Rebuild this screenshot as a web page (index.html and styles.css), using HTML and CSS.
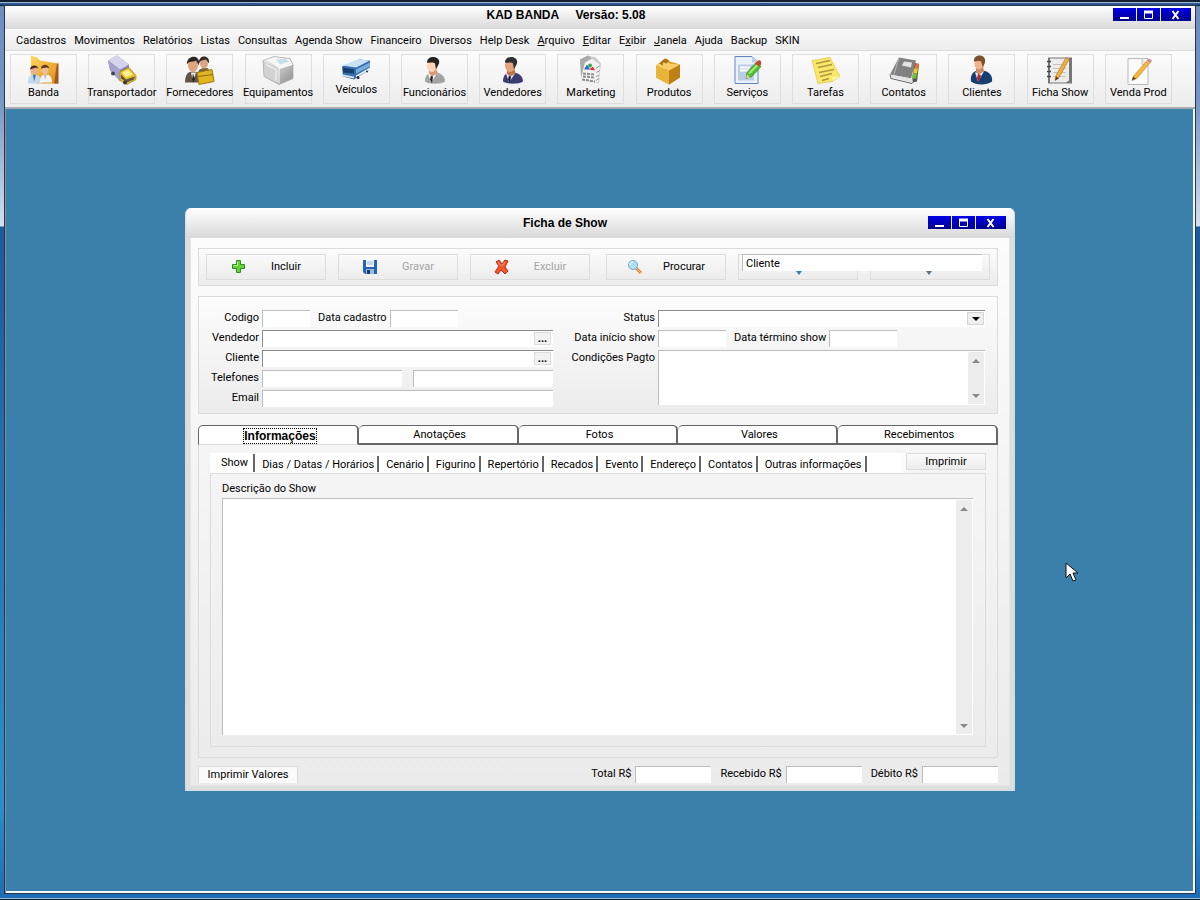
FILE: index.html
```html
<!DOCTYPE html>
<html lang="pt-BR">
<head>
    <meta charset="UTF-8">
    <title>KAD BANDA - Ficha de Show</title>
    <link rel="stylesheet" href="styles.css">
</head>
<body>

<div class="app">
    <header class="title-bar">
        <h1>KAD BANDA &nbsp;&nbsp;&nbsp; Versão: 5.08</h1>
        <div class="win-buttons">
            <button type="button" aria-label="Minimizar"><svg width="12" height="12"><path d="M1 9h9" stroke="#fff" stroke-width="2"/></svg></button>
            <button type="button" aria-label="Maximizar"><svg width="12" height="12"><path d="M1.500 3v6.500h8V3" fill="none" stroke="#fff"/><path d="M1 3h9" stroke="#fff" stroke-width="3"/></svg></button>
            <button type="button" class="close" aria-label="Fechar"><svg width="12" height="12"><path d="M2.500 2l6 8M8.500 2l-6 8" stroke="#fff" stroke-width="2"/></svg></button>
        </div>
    </header>

    <nav class="menu">
        <button type="button">Cadastros</button>
        <button type="button">Movimentos</button>
        <button type="button">Relatórios</button>
        <button type="button">Listas</button>
        <button type="button">Consultas</button>
        <button type="button">Agenda Show</button>
        <button type="button">Financeiro</button>
        <button type="button">Diversos</button>
        <button type="button">Help Desk</button>
        <button type="button"><u>A</u>rquivo</button>
        <button type="button"><u>E</u>ditar</button>
        <button type="button">E<u>x</u>ibir</button>
        <button type="button"><u>J</u>anela</button>
        <button type="button">Ajuda</button>
        <button type="button">Backup</button>
        <button type="button">SKIN</button>
    </nav>

    <div class="toolbar">
        <button type="button">
            <svg class="icon" viewBox="0 0 32 29">
                <defs>
                    <linearGradient id="gold" x1="0" y1="0" x2="1" y2="1"><stop offset="0" stop-color="#ffd95e"/><stop offset="1" stop-color="#dd8a1c"/></linearGradient>
                    <linearGradient id="grey" x1="0" y1="0" x2="1" y2="1"><stop offset="0" stop-color="#fafafa"/><stop offset="1" stop-color="#8d8d8d"/></linearGradient>
                </defs>
                <path d="M3 0l6 2 3 3 18 3v20H8L3 21z" fill="url(#gold)"/>
                <path d="M29 8h1.500v20H26z" fill="#9c5b1c"/>
                <path d="M0 28c0-7 2-9 6-9 5 0 7 3 8 9z" fill="#c6d9ec"/>
                <path d="M5 19l1 7 2-7z" fill="#3470b4"/>
                <ellipse cx="6" cy="15" rx="3.500" ry="4" fill="#e9b08a"/>
                <path d="M2 14c0-5 8-5 8-1l-2-1z" fill="#4a2b17"/>
                <path d="M12 27c0-6 2-8 6-8s6 3 6 8z" fill="#f3f3f3"/>
                <path d="M16 19l1 5 2-5z" fill="#b7babf"/>
                <ellipse cx="17" cy="14" rx="3.500" ry="4.500" fill="#efbd98"/>
                <path d="M13 13c0-5 8-5 8 0l-2-1z" fill="#68391d"/>
            </svg>
            <span>Banda</span>
        </button>
        <button type="button">
            <svg class="icon" viewBox="0 0 32 29">
                <path d="M2 5l9-5 12 9v6l-3 11L4 14z" fill="#8b87b5"/>
                <path d="M2 5l9-5 12 9-9 5z" fill="#d5d3ee"/>
                <path d="M2 5l12 9v12L4 15z" fill="#a6a2ce"/>
                <path d="M14 16l9-4 7 8v4l-9 5-7-4z" fill="#f1bd22" stroke="#8f7220" stroke-width=".6"/>
                <path d="M16 17l6-3 5 5-7 3z" fill="#fff193"/>
                <path d="M15 19l5 5 9-3-1 3-7 3-6-4z" fill="#5d5a43"/>
                <circle cx="7" cy="18" r="2" fill="#44435a"/>
                <circle cx="19" cy="27" r="2" fill="#3a3a42"/>
            </svg>
            <span>Transportador</span>
        </button>
        <button type="button">
            <svg class="icon" viewBox="0 0 32 29">
                <path d="M1 27c0-8 3-11 8-11 6 0 9 4 9 11z" fill="#625548"/>
                <path d="M7 17l2 9 3-9z" fill="#eee"/><path d="M9 18l-1 6 1 3 2-3z" fill="#282828"/>
                <ellipse cx="9" cy="10" rx="5" ry="6.500" fill="#e0a481"/>
                <path d="M3 9c-1-9 12-11 12-2v3l-3-5c-3 2-7 0-9 4z" fill="#2c2522"/>
                <path d="M14 18c0-7 12-7 12 0z" fill="#5b5751"/>
                <ellipse cx="20" cy="8" rx="4" ry="5" fill="#dba482"/>
                <path d="M15 8c-1-9 10-9 10-2v2l-3-4c-3 1-5 0-7 4z" fill="#352c28"/>
                <path d="M13 17l15-3 2 12-15 3z" fill="#e0b51e" stroke="#9f7913"/>
                <path d="M18 16v-2l6-1v2M14 21l15-2" fill="none" stroke="#8e6a10"/>
            </svg>
            <span>Fornecedores</span>
        </button>
        <button type="button">
            <svg class="icon" viewBox="0 0 32 29">
                <path d="M1 5L12 1l16 2 3 6v14l-14 6L2 21z" fill="url(#grey)"/>
                <path d="M1 5l15 8v15L2 21z" fill="#d2d2d2"/>
                <path d="M4 4l9-3 14 2 4 6-14 4z" fill="#f6f6f6"/>
                <path d="M14 4l9-1 4 3-9 3z" fill="#c4e1ee"/>
                <path d="M1 5L12 1l16 2 3 6v14l-14 6L2 21z" fill="none" stroke="#a5a5a5" stroke-width=".7"/>
                <path d="M17 13l13-4M17 13v15" stroke="#fff"/>
                <path d="M4 9l10 5v11" fill="none" stroke="#f9f9f9"/>
            </svg>
            <span>Equipamentos</span>
        </button>
        <button type="button">
            <svg class="icon icon-low" viewBox="0 0 32 26">
                <path d="M2 11L19 4l11 1v9L14 24 3 21z" fill="#356eaf"/>
                <path d="M2 10L19 4l11 1-14 7z" fill="#c9e3f5"/>
                <path d="M3 12l11 2v4L3 17z" fill="#173e6c"/>
                <path d="M16 14l14-7v4l-14 7z" fill="#79aedc"/>
                <path d="M16 20l14-8v2l-14 8z" fill="#f5f8fa"/>
                <path d="M3 19l11 2v2L3 21z" fill="#d3dce3"/>
                <circle cx="18" cy="22" r="1.500" fill="#222c38"/><circle cx="27" cy="16" r="1" fill="#222c38"/>
            </svg>
            <span>Veículos</span>
        </button>
        <button type="button">
            <svg class="icon" viewBox="0 0 32 29">
                <path d="M6 26c0-7 4-9 9-9 6 0 11 3 11 9-4 3-16 3-20 0z" fill="#a3a3a3"/>
                <path d="M9 18l3 9 6-9z" fill="#f7f7f7"/><path d="M12 20l-1 4 2 4 1-7z" fill="#262626"/>
                <path d="M10 13h7l2 5-6 3-3-3z" fill="#d99b76"/>
                <ellipse cx="13" cy="10" rx="5" ry="6.500" fill="#ffd3b6"/>
                <path d="M8 7c0-8 14-7 12 1l-3 6-1-6c-2-2-5 0-8-1z" fill="#27231f"/>
            </svg>
            <span>Funcionários</span>
        </button>
        <button type="button">
            <svg class="icon" viewBox="0 0 32 29">
                <path d="M6 26c0-7 4-9 9-9 6 0 11 3 11 9-4 3-16 3-20 0z" fill="#3d3c72"/>
                <path d="M9 18l3 9 6-9z" fill="#e4e8f3"/><path d="M12 20l-1 4 2 4 1-7z" fill="#191b34"/>
                <path d="M10 13h7l2 5-6 3-3-3z" fill="#b97650"/>
                <ellipse cx="13" cy="10" rx="5" ry="6.500" fill="#e8a27c"/>
                <path d="M8 7c0-8 14-7 12 1l-3 6-1-6c-2-2-5 0-8-1z" fill="#302e35"/>
            </svg>
            <span>Vendedores</span>
        </button>
        <button type="button">
            <svg class="icon" viewBox="0 0 32 29">
                <path d="M5 4l8-4 8 2 5 6-2 20-17-4z" fill="#cfcfcf"/>
                <path d="M8 6l8-3 9 6-2 18-16-3z" fill="#f3f3f3"/>
                <path d="M5 4l8-4 4 3-7 4-4 15z" fill="#aaa"/>
                <path d="M9 14l3-5 3 5z" fill="#2b66d0"/><circle cx="15" cy="10" r="2" fill="#36ab46"/><path d="M14 14l4-3 2 4z" fill="#dc3434"/>
                <path d="M8 18l12 1M8 21l12 1M7 24l13 2" stroke="#8d8d8d" stroke-width="2" stroke-dasharray="3 1"/>
                <path d="M21 13l4-3M21 17l4-2M21 21l3-1M21 25l3-2" stroke="#999"/>
            </svg>
            <span>Marketing</span>
        </button>
        <button type="button">
            <svg class="icon" viewBox="0 0 32 29">
                <path d="M3 10l9-7 3 1 2 2 10 3v13l-11 7L3 22z" fill="#d99e22"/>
                <path d="M3 10l13 5v14L3 22z" fill="#e9b43a"/>
                <path d="M16 15l11-6v13l-11 7z" fill="#bd8117"/>
                <path d="M3 10l8-6 4 1 1 3 11 1-11 6z" fill="#f5cf69"/>
                <path d="M6 8l4 2v-3l4 1 2-3-4-2z" fill="#ad7514"/>
            </svg>
            <span>Produtos</span>
        </button>
        <button type="button">
            <svg class="icon" viewBox="0 0 32 29">
                <path d="M4 1h17l6 6v21H4z" fill="#eaf2ff" stroke="#6287bc"/>
                <path d="M21 1v6h6z" fill="#bcd0ed"/>
                <path d="M7 9h16v16H7z" fill="#bccce7"/><path d="M9 12h10M9 15h10" stroke="#fff" stroke-width="2"/>
                <path d="M15 23l1-6 9-10 5 4-9 10z" fill="#55bd31" stroke="#2d8b1d" stroke-width=".7"/>
                <path d="M18 18l9-9" stroke="#a5ea72" stroke-width="2"/>
                <path d="M24 8l3-3c2-1 4 1 3 4l-2 2z" fill="#c54832"/>
                <path d="M15 23l1-4 3 3z" fill="#f0c99a"/>
            </svg>
            <span>Serviços</span>
        </button>
        <button type="button">
            <svg class="icon" viewBox="0 0 32 29">
                <path d="M2 5l18-3 10 19-8 5-14 2z" fill="#fbe768" stroke="#dcc34b" stroke-width=".7"/>
                <path d="M23 25l7-4-8 1z" fill="#fff7b0"/>
                <path d="M6 8l14-3M8 12l14-3M9 17l15-3M10 21l12-3M12 25l7-2" stroke="#ad9842" stroke-width="1.500"/>
            </svg>
            <span>Tarefas</span>
        </button>
        <button type="button">
            <svg class="icon" viewBox="0 0 32 29">
                <path d="M26 7l5 2-2 17-5 1z" fill="#555"/>
                <path d="M28 8h3l-1 5h-4z" fill="#e57332"/><path d="M26 13h4l-1 5h-4z" fill="#e8cf2b"/><path d="M25 18h4l-1 5h-4z" fill="#70c332"/>
                <path d="M11 2l17 3-5 18-21-4z" fill="#818181"/>
                <path d="M2 19l22 4 1 4-21-5z" fill="#e5e5e5"/><path d="M2 19l1 4 21 5 2-2" fill="none" stroke="#666"/>
                <path d="M11 2L6 19" stroke="#bbb"/>
                <path d="M16 6l8 1-1 5-9-2z" fill="#e4e4e4"/>
            </svg>
            <span>Contatos</span>
        </button>
        <button type="button">
            <svg class="icon" viewBox="0 0 32 29">
                <path d="M5 26c-1-8 3-11 9-11 8 0 13 4 12 11-5 4-16 4-21 0z" fill="#153f70"/>
                <path d="M9 17l3 9 6-10z" fill="#e6eef7"/><path d="M12 18l-1 5 2 4 2-7z" fill="#b22530"/>
                <path d="M10 11h7l1 5-5 3-3-2z" fill="#cc8a64"/>
                <ellipse cx="13" cy="8" rx="4.500" ry="6" fill="#f0b48e"/>
                <path d="M8 6c-1-8 13-8 11 1l-2 5-2-6c-2-1-5 0-7 0z" fill="#7f5130"/>
            </svg>
            <span>Clientes</span>
        </button>
        <button type="button">
            <svg class="icon" viewBox="0 0 32 29">
                <path d="M4 2h24v26H4z" fill="#777"/>
                <path d="M6 3h19v22l-3 2H6z" fill="#ececec"/>
                <path d="M3 6h4M3 11h4M3 16h4M3 21h4" stroke="#444" stroke-width="1.500"/>
                <path d="M9 9h13M9 13h13M9 17h13M9 21h13" stroke="#c3c3c3"/>
                <path d="M11 25l1-5L22 2l3 2-10 18z" fill="#f0ae3b" stroke="#a76b23" stroke-width=".6"/>
                <path d="M11 25l1-4 3 2z" fill="#5b3a25"/>
            </svg>
            <span>Ficha Show</span>
        </button>
        <button type="button">
            <svg class="icon" viewBox="0 0 32 29">
                <path d="M6 3h20v26H6z" fill="#fbfbfb" stroke="#b9b9b9"/>
                <path d="M20 3v6h6" fill="#e5e5e5" stroke="#c5c5c5"/>
                <path d="M10 25l2-5L26 4l3 2-14 17z" fill="#f6b63d" stroke="#c48431" stroke-width=".6"/>
                <path d="M25 5l2-2 3 2-2 3z" fill="#c891a3"/>
                <path d="M10 25l1-4 3 2z" fill="#5f402b"/>
            </svg>
            <span>Venda Prod</span>
        </button>
    </div>

    <main class="workspace">
        <section class="window">
            <header class="window-title">
                <h2>Ficha de Show</h2>
                <div class="win-buttons">
                    <button type="button" aria-label="Minimizar"><svg width="12" height="12"><path d="M1 9h9" stroke="#fff" stroke-width="2"/></svg></button>
                    <button type="button" aria-label="Maximizar"><svg width="12" height="12"><path d="M1.500 3v6.500h8V3" fill="none" stroke="#fff"/><path d="M1 3h9" stroke="#fff" stroke-width="3"/></svg></button>
                    <button type="button" class="close" aria-label="Fechar"><svg width="12" height="12"><path d="M2.500 2l6 8M8.500 2l-6 8" stroke="#fff" stroke-width="2"/></svg></button>
                </div>
            </header>

            <form class="window-body">
                <div class="panel actions">
                    <button type="button" class="btn">
                        <svg width="16" height="16"><path d="M5.500 1.500h4v4h4v4h-4v4h-4v-4h-4v-4h4z" fill="#63d13c" stroke="#2e8e22"/><path d="M6.500 2.500v4h-4" fill="none" stroke="#b7f08f"/></svg>
                        <span>Incluir</span>
                    </button>
                    <button type="button" class="btn" disabled>
                        <svg width="16" height="16"><path d="M1 1h14v14H3l-2-2z" fill="#2463bb"/><path d="M4 1h8v7H4z" fill="#eef5fc"/><path d="M5 3h6M5 5h6" stroke="#9db9dc"/><path d="M4 10h8v5H4z" fill="#9eb9d4"/><path d="M5 11h3v4H5z" fill="#173b73"/></svg>
                        <span>Gravar</span>
                    </button>
                    <button type="button" class="btn" disabled>
                        <svg width="16" height="16"><path d="M2 3l3-2 3 4 3-4 3 1-3 6 3 4-3 3-4-4-3 4-3-2 4-6z" fill="#f2562c" stroke="#b52d16"/><path d="M4 3l3 4M11 3L8 7" stroke="#ff9e75"/></svg>
                        <span>Excluir</span>
                    </button>
                    <button type="button" class="btn search">
                        <svg width="16" height="16"><path d="M9 9l5 5" stroke="#d18445" stroke-width="3"/><path d="M9 9l5 5" stroke="#f7c18c"/><circle cx="6" cy="6" r="4.500" fill="#aee0f7" stroke="#78aac9"/><path d="M3 6c0-2 1-3 3-3" fill="none" stroke="#fff"/></svg>
                        <span>Procurar</span>
                    </button>
                    <div class="covered">
                        <button type="button" class="btn nav-btn" aria-label="Anterior"><svg width="16" height="16"><path d="M6 12h6l-3 4z" fill="#347db3"/></svg></button>
                        <button type="button" class="btn nav-btn" aria-label="Próximo"><svg width="16" height="16"><path d="M4 12h6l-3 4z" fill="#5b7387"/></svg></button>
                        <input class="search-by" type="text" value="Cliente" aria-label="Procurar por">
                    </div>
                </div>

                <div class="panel record">
                    <div class="fields">
                        <label for="codigo">Codigo</label>
                        <div class="line">
                            <input type="text" id="codigo" class="w-code">
                            <label for="cadastro" class="push">Data cadastro</label>
                            <input type="text" id="cadastro" class="w-date">
                        </div>
                        <label for="vendedor">Vendedor</label>
                        <div class="line lookup"><input type="text" id="vendedor"><button type="button" aria-label="Buscar vendedor">...</button></div>
                        <label for="cliente">Cliente</label>
                        <div class="line lookup"><input type="text" id="cliente"><button type="button" aria-label="Buscar cliente">...</button></div>
                        <label for="fone1">Telefones</label>
                        <div class="line phones">
                            <input type="text" id="fone1">
                            <input type="text" aria-label="Telefone 2">
                        </div>
                        <label for="email">Email</label>
                        <div class="line"><input type="text" id="email" class="grow"></div>
                    </div>

                    <div class="fields fields-right">
                        <label for="status">Status</label>
                        <div class="line combo">
                            <select id="status"><option></option></select>
                            <svg width="17" height="13"><path d="M.5.500h16v12H.5z" fill="#efefef" stroke="#d4d4d4"/><path d="M5 5h8L9 9z" fill="#000"/></svg>
                        </div>
                        <label for="inicio">Data início show</label>
                        <div class="line">
                            <input type="text" id="inicio" class="w-date">
                            <label for="termino" class="push">Data término show</label>
                            <input type="text" id="termino" class="w-date">
                        </div>
                        <label for="pagto">Condições Pagto</label>
                        <div class="memo memo-small">
                            <textarea id="pagto"></textarea>
                            <div class="scroll">
                                <button type="button" aria-label="Acima"><svg width="8" height="4"><path d="M0 4l4-4 4 4z" fill="#888"/></svg></button>
                                <button type="button" aria-label="Abaixo"><svg width="8" height="4"><path d="M0 0h8L4 4z" fill="#888"/></svg></button>
                            </div>
                        </div>
                    </div>
                </div>

                <div class="tabs">
                    <button type="button" class="active"><span>Informações</span></button>
                    <button type="button"><span>Anotações</span></button>
                    <button type="button"><span>Fotos</span></button>
                    <button type="button"><span>Valores</span></button>
                    <button type="button"><span>Recebimentos</span></button>
                </div>

                <div class="tab-page">
                    <div class="sub-bar">
                        <div class="sub-tabs">
                            <button type="button" class="active">Show</button>
                            <button type="button">Dias / Datas / Horários</button>
                            <button type="button">Cenário</button>
                            <button type="button">Figurino</button>
                            <button type="button">Repertório</button>
                            <button type="button">Recados</button>
                            <button type="button">Evento</button>
                            <button type="button">Endereço</button>
                            <button type="button">Contatos</button>
                            <button type="button">Outras informações</button>
                        </div>
                        <button type="button" class="btn print">Imprimir</button>
                    </div>
                    <div class="sub-page">
                        <label for="descricao">Descrição do Show</label>
                        <div class="memo">
                            <textarea id="descricao"></textarea>
                            <div class="scroll">
                                <button type="button" aria-label="Acima"><svg width="8" height="4"><path d="M0 4l4-4 4 4z" fill="#888"/></svg></button>
                                <button type="button" aria-label="Abaixo"><svg width="8" height="4"><path d="M0 0h8L4 4z" fill="#888"/></svg></button>
                            </div>
                        </div>
                    </div>
                </div>

                <footer class="totals">
                    <button type="button" class="btn print-values">Imprimir Valores</button>
                    <label for="total">Total R$</label>
                    <input type="text" id="total">
                    <label for="recebido">Recebido R$</label>
                    <input type="text" id="recebido">
                    <label for="debito">Débito R$</label>
                    <input type="text" id="debito">
                </footer>
            </form>
        </section>

        <svg class="cursor" width="14" height="20"><path d="M1 1v15l4-4 3 7 3-1-3-7h5z" fill="#fff" stroke="#111"/></svg>
    </main>
</div>

</body>
</html>
```
FILE: styles.css
```css
* {
    box-sizing: border-box;
}
html, body, h1, h2 {
    margin: 0;
    padding: 0;
}
body, button, input, select, textarea {
    font-family: Roboto, "Liberation Sans", Arial, sans-serif;
    font-size: 11px;
    line-height: 16px;
    color: #000;
}
button {
    padding: 0;
    border: 0;
    background: none;
    white-space: nowrap;
}
svg {
    display: block;
    flex: none;
}
body {
    min-height: 100vh;
    display: flex;
    padding: 6px 5px 7px;
    background:
        linear-gradient(#14202f 2px, #9db7d6 2px, #9db7d6 3px, #2b568f 3px, #2b568f 5px, #0c1c33 5px) top / 100% 6px no-repeat,
        linear-gradient(#1f6cb5 5px, #8fc0e6 5px, #8fc0e6 6px, #101c2c 6px) bottom / 100% 7px no-repeat,
        linear-gradient(#6f8dbc, #7795c2 100px, #d3dfee 226px, #1c5a9c 227px, #2a8fd0 800px, #1f6cb5);
}

/* main window */
.app {
    flex: 1;
    display: flex;
    flex-direction: column;
    min-width: 0;
    box-shadow: 0 0 0 1px #24364f;
}
.title-bar, .window-title {
    display: flex;
    justify-content: center;
    position: relative;
    background: linear-gradient(#fff, #d8d8d8);
}
.title-bar {
    height: 23px;
    padding-right: 68px;
}
h1, h2 {
    font-family: "Liberation Sans", Arial, sans-serif;
    font-size: 12px;
    line-height: 18px;
    font-weight: bold;
}
.win-buttons {
    position: absolute;
    top: 2px;
    right: 4px;
    display: flex;
    gap: 1px;
}
.win-buttons button {
    width: 23px;
    height: 13px;
    display: flex;
    align-items: center;
    justify-content: center;
    background: linear-gradient(#0000e8, #00008c);
}
.win-buttons .close {
    width: 30px;
}
.menu {
    display: flex;
    gap: 8px;
    height: 22px;
    padding: 2px 11px 0;
    background: linear-gradient(#f8f8f8, #ededed);
    border-bottom: 1px solid #dcdcdc;
}
.toolbar {
    display: flex;
    justify-content: space-between;
    padding: 3px 23px 3px 5px;
    background: linear-gradient(#fcfcfc, #ececec);
    border-bottom: 2px solid #a9a9ad;
}
.toolbar button {
    width: 67px;
    height: 50px;
    display: flex;
    flex-direction: column;
    align-items: center;
    border: 1px solid #dedede;
}
.icon {
    width: 32px;
    height: 30px;
}
.icon-low {
    height: 27px;
}
.workspace {
    flex: 1;
    position: relative;
    background: #3b80ab;
    border: 1px solid #8a8f92;
    border-width: 0 0 0 1px;
    box-shadow: inset -2px -2px #f4f8fb;
}

/* child window */
.window {
    position: absolute;
    top: 99px;
    left: 179px;
    width: 830px;
    padding: 0 4px 4px;
    background: #dedede;
    border: 1px solid #cbdde6;
    border-top: 0;
    border-radius: 6px 6px 0 0;
    overflow: hidden;
}
.window-title {
    height: 30px;
    margin: 0 -4px;
    padding: 6px 70px 0 0;
}
.window-title .win-buttons {
    top: 8px;
    right: 8px;
}
.window-body {
    padding: 10px 11px 2px 7px;
    background: linear-gradient(#fcfcfc, #f5f5f5 40%, #ebebeb);
    border: 1px solid #e8e4e0;
    border-width: 0 1px 1px;
}
.panel {
    border: 1px solid #dcdcdc;
    background: linear-gradient(#fcfcfc, #ececec);
}
.btn {
    display: flex;
    align-items: center;
    justify-content: center;
    border: 1px solid #dcdcdc;
    background: linear-gradient(#fafafa, #ececec);
}
.btn:disabled {
    color: #a5a5a5;
}
.actions {
    display: flex;
    gap: 12px;
    height: 38px;
    padding: 5px 7px;
}
.actions .btn {
    width: 120px;
    height: 26px;
    gap: 24px;
}
.actions .search {
    margin-left: 4px;
    gap: 20px;
}
.covered {
    display: flex;
    gap: 12px;
    position: relative;
}
.search-by {
    position: absolute;
    top: 0;
    left: 4px;
    width: 240px;
}

/* fields */
input, select, textarea {
    min-width: 0;
    height: 17px;
    margin: 0;
    padding: 0 3px;
    border: 1px solid #bdbdbd;
    border-width: 1px 0 0 1px;
    border-radius: 0;
    background: #fff;
    outline: 0;
}
.record {
    display: flex;
    gap: 18px;
    margin-top: 10px;
    padding: 13px 12px 6px 11px;
}
.fields {
    flex: none;
    display: grid;
    grid-template-columns: 49px 291px;
    grid-auto-rows: 17px;
    gap: 3px;
}
.fields-right {
    flex: 1;
    grid-template-columns: 84px 1fr;
}
.fields label {
    text-align: right;
    white-space: nowrap;
}
.line {
    display: flex;
}
.line .push {
    margin: 0 3px 0 8px;
}
.w-code {
    width: 48px;
}
.w-date {
    width: 68px;
}
.grow {
    flex: 1;
}
.lookup {
    position: relative;
}
.lookup input {
    flex: 1;
    border-color: #8d8d8d;
}
.lookup button {
    position: absolute;
    top: 2px;
    right: 2px;
    width: 17px;
    height: 13px;
    border: 1px solid #dcdcdc;
    background: #f1f1f1;
    line-height: 8px;
    font-weight: bold;
}
.phones {
    gap: 11px;
}
.phones input {
    flex: 1;
}
.combo {
    position: relative;
}
.combo select {
    flex: 1;
    appearance: none;
    border-color: #8d8d8d;
}
.combo svg {
    position: absolute;
    top: 2px;
    right: 1px;
    pointer-events: none;
}
.memo {
    display: flex;
    height: 237px;
    border: 1px solid #bdbdbd;
    border-width: 1px 0 0 1px;
    background: #fff;
}
.memo-small {
    height: 55px;
}
.memo textarea {
    flex: 1;
    height: auto;
    border: 0;
    resize: none;
}
.scroll {
    display: flex;
    flex-direction: column;
    justify-content: space-between;
    width: 16px;
    margin: 1px 1px 1px 0;
    background: #ededed;
}
.scroll button {
    height: 17px;
    display: flex;
    align-items: center;
    justify-content: center;
}
.fields .memo {
    grid-row: span 3;
}

/* tabs */
.tabs {
    display: flex;
    margin-top: 11px;
}
.tabs button {
    flex: 1;
    height: 20px;
    padding: 1px 0 0 4px;
    border: 1px solid #666;
    border-width: 1px 2px 2px 0;
    border-radius: 5px 5px 0 0;
    background: #fff;
}
.tabs button:first-child {
    border-left-width: 1px;
}
.tabs .active {
    border-bottom: 1px solid #dcdcdc;
    font-family: "Liberation Sans", Arial, sans-serif;
    font-size: 12px;
    font-weight: bold;
}
.tabs .active span {
    outline: 1px dotted #000;
}
.tab-page {
    padding: 8px 11px 10px;
    border: 1px solid #dcdcdc;
    border-top: 0;
}
.sub-bar {
    display: flex;
    justify-content: space-between;
    height: 20px;
    background: linear-gradient(90deg, #fff 690px, transparent 700px);
}
.sub-tabs {
    display: flex;
    align-items: flex-end;
    padding-bottom: 1px;
}
.sub-tabs button {
    height: 16px;
    padding: 1px 3px 0 7px;
    border-right: 2px solid #666;
}
.sub-tabs .active {
    height: 18px;
    padding: 0 5px 0 11px;
}
.print {
    width: 80px;
    height: 17px;
}
.sub-page {
    padding: 7px 12px 11px 11px;
    border: 1px solid #dcdcdc;
}
.sub-page label {
    display: block;
    margin-bottom: 1px;
}
.totals {
    display: flex;
    align-items: center;
    height: 17px;
    margin-top: 8px;
}
.print-values {
    width: 100px;
    height: 17px;
    margin-right: auto;
    background: #fafafa;
    border-width: 1px 1px 0;
}
.totals label {
    margin: 0 4px 2px 9px;
}
.totals input {
    width: 76px;
}
.cursor {
    position: absolute;
    top: 453px;
    left: 1059px;
}
```
